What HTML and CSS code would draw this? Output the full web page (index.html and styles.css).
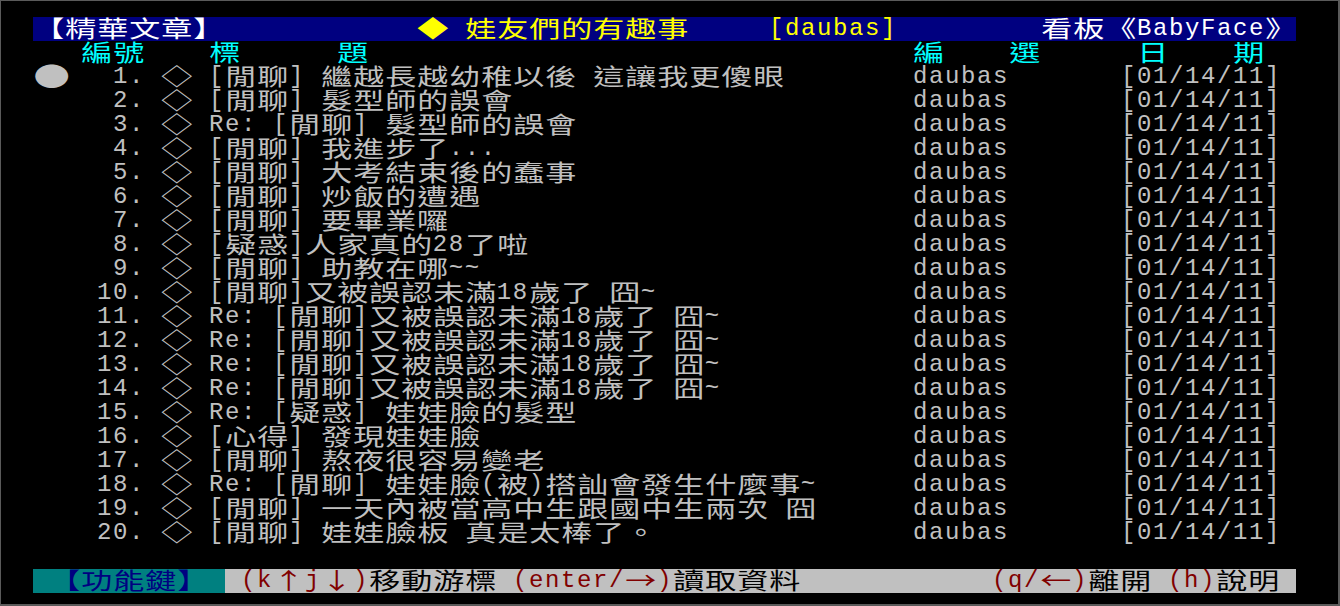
FILE: index.html
```html
<!DOCTYPE html>
<html lang="zh-Hant">
<head>
<meta charset="utf-8">
<title>精華文章 - BabyFace</title>
<link rel="stylesheet" href="styles.css">
</head>
<body>
<div class="term">
  <div class="hdr">
    <div><i>【</i><i>精</i><i>華</i><i>文</i><i>章</i><i>】</i></div>
    <div class="y"><i>◆</i> <i>娃</i><i>友</i><i>們</i><i>的</i><i>有</i><i>趣</i><i>事</i></div>
    <div class="y">[daubas]</div>
    <div><i>看</i><i>板</i><i>《</i>BabyFace<i>》</i></div>
  </div>
  <div class="cols">
    <div class="c2"><i>編</i><i>號</i></div>
    <div><i>標</i></div>
    <div><i>題</i></div>
    <div><i>編</i></div>
    <div><i>選</i></div>
    <div><i>日</i></div>
    <div><i>期</i></div>
  </div>
  <div class="list">
    <div class="it"><div class="cur"><i class="dot">●</i></div><div class="no">1.</div><div class="sy"><i>◇</i></div><div>[<i>閒</i><i>聊</i>] <i>繼</i><i>越</i><i>長</i><i>越</i><i>幼</i><i>稚</i><i>以</i><i>後</i> <i>這</i><i>讓</i><i>我</i><i>更</i><i>傻</i><i>眼</i></div><div>daubas</div><div>[01/14/11]</div></div>
    <div class="it"><div class="no">2.</div><div class="sy"><i>◇</i></div><div>[<i>閒</i><i>聊</i>] <i>髮</i><i>型</i><i>師</i><i>的</i><i>誤</i><i>會</i></div><div>daubas</div><div>[01/14/11]</div></div>
    <div class="it"><div class="no">3.</div><div class="sy"><i>◇</i></div><div>Re: [<i>閒</i><i>聊</i>] <i>髮</i><i>型</i><i>師</i><i>的</i><i>誤</i><i>會</i></div><div>daubas</div><div>[01/14/11]</div></div>
    <div class="it"><div class="no">4.</div><div class="sy"><i>◇</i></div><div>[<i>閒</i><i>聊</i>] <i>我</i><i>進</i><i>步</i><i>了</i>...</div><div>daubas</div><div>[01/14/11]</div></div>
    <div class="it"><div class="no">5.</div><div class="sy"><i>◇</i></div><div>[<i>閒</i><i>聊</i>] <i>大</i><i>考</i><i>結</i><i>束</i><i>後</i><i>的</i><i>蠢</i><i>事</i></div><div>daubas</div><div>[01/14/11]</div></div>
    <div class="it"><div class="no">6.</div><div class="sy"><i>◇</i></div><div>[<i>閒</i><i>聊</i>] <i>炒</i><i>飯</i><i>的</i><i>遭</i><i>遇</i></div><div>daubas</div><div>[01/14/11]</div></div>
    <div class="it"><div class="no">7.</div><div class="sy"><i>◇</i></div><div>[<i>閒</i><i>聊</i>] <i>要</i><i>畢</i><i>業</i><i>囉</i></div><div>daubas</div><div>[01/14/11]</div></div>
    <div class="it"><div class="no">8.</div><div class="sy"><i>◇</i></div><div>[<i>疑</i><i>惑</i>]<i>人</i><i>家</i><i>真</i><i>的</i>28<i>了</i><i>啦</i></div><div>daubas</div><div>[01/14/11]</div></div>
    <div class="it"><div class="no">9.</div><div class="sy"><i>◇</i></div><div>[<i>閒</i><i>聊</i>] <i>助</i><i>教</i><i>在</i><i>哪</i>~~</div><div>daubas</div><div>[01/14/11]</div></div>
    <div class="it"><div class="no">10.</div><div class="sy"><i>◇</i></div><div>[<i>閒</i><i>聊</i>]<i>又</i><i>被</i><i>誤</i><i>認</i><i>未</i><i>滿</i>18<i>歲</i><i>了</i> <i>囧</i>~</div><div>daubas</div><div>[01/14/11]</div></div>
    <div class="it"><div class="no">11.</div><div class="sy"><i>◇</i></div><div>Re: [<i>閒</i><i>聊</i>]<i>又</i><i>被</i><i>誤</i><i>認</i><i>未</i><i>滿</i>18<i>歲</i><i>了</i> <i>囧</i>~</div><div>daubas</div><div>[01/14/11]</div></div>
    <div class="it"><div class="no">12.</div><div class="sy"><i>◇</i></div><div>Re: [<i>閒</i><i>聊</i>]<i>又</i><i>被</i><i>誤</i><i>認</i><i>未</i><i>滿</i>18<i>歲</i><i>了</i> <i>囧</i>~</div><div>daubas</div><div>[01/14/11]</div></div>
    <div class="it"><div class="no">13.</div><div class="sy"><i>◇</i></div><div>Re: [<i>閒</i><i>聊</i>]<i>又</i><i>被</i><i>誤</i><i>認</i><i>未</i><i>滿</i>18<i>歲</i><i>了</i> <i>囧</i>~</div><div>daubas</div><div>[01/14/11]</div></div>
    <div class="it"><div class="no">14.</div><div class="sy"><i>◇</i></div><div>Re: [<i>閒</i><i>聊</i>]<i>又</i><i>被</i><i>誤</i><i>認</i><i>未</i><i>滿</i>18<i>歲</i><i>了</i> <i>囧</i>~</div><div>daubas</div><div>[01/14/11]</div></div>
    <div class="it"><div class="no">15.</div><div class="sy"><i>◇</i></div><div>Re: [<i>疑</i><i>惑</i>] <i>娃</i><i>娃</i><i>臉</i><i>的</i><i>髮</i><i>型</i></div><div>daubas</div><div>[01/14/11]</div></div>
    <div class="it"><div class="no">16.</div><div class="sy"><i>◇</i></div><div>[<i>心</i><i>得</i>] <i>發</i><i>現</i><i>娃</i><i>娃</i><i>臉</i></div><div>daubas</div><div>[01/14/11]</div></div>
    <div class="it"><div class="no">17.</div><div class="sy"><i>◇</i></div><div>[<i>閒</i><i>聊</i>] <i>熬</i><i>夜</i><i>很</i><i>容</i><i>易</i><i>變</i><i>老</i></div><div>daubas</div><div>[01/14/11]</div></div>
    <div class="it"><div class="no">18.</div><div class="sy"><i>◇</i></div><div>Re: [<i>閒</i><i>聊</i>] <i>娃</i><i>娃</i><i>臉</i>(<i>被</i>)<i>搭</i><i>訕</i><i>會</i><i>發</i><i>生</i><i>什</i><i>麼</i><i>事</i>~</div><div>daubas</div><div>[01/14/11]</div></div>
    <div class="it"><div class="no">19.</div><div class="sy"><i>◇</i></div><div>[<i>閒</i><i>聊</i>] <i>一</i><i>天</i><i>內</i><i>被</i><i>當</i><i>高</i><i>中</i><i>生</i><i>跟</i><i>國</i><i>中</i><i>生</i><i>兩</i><i>次</i> <i>囧</i></div><div>daubas</div><div>[01/14/11]</div></div>
    <div class="it"><div class="no">20.</div><div class="sy"><i>◇</i></div><div>[<i>閒</i><i>聊</i>] <i>娃</i><i>娃</i><i>臉</i><i>板</i> <i>真</i><i>是</i><i>太</i><i>棒</i><i>了</i><i>。</i></div><div>daubas</div><div>[01/14/11]</div></div>
  </div>
  <div class="ftr">
    <div class="fk"> <i>【</i><i>功</i><i>能</i><i>鍵</i><i>】</i> </div>
    <div class="fb">
      <span><span class="r">(k<i>↑</i>j<i>↓</i>)</span><i>移</i><i>動</i><i>游</i><i>標</i> <span class="r">(enter/<i>→</i>)</span><i>讀</i><i>取</i><i>資</i><i>料</i></span>
      <span><span class="r">(q/<i>←</i>)</span><i>離</i><i>開</i> <span class="r">(h)</span><i>說</i><i>明</i></span>
    </div>
  </div>
</div>
</body>
</html>
```
FILE: styles.css
```css
* {
  margin: 0;
  padding: 0;
  box-sizing: border-box;
}

html {
  background: #000;
}

body {
  width: 1340px;
  height: 606px;
  background: #000;
  border-style: solid;
  border-color: #5a5a5a;
  border-width: 1px 2px 2px 1px;
  overflow: hidden;
}

.term {
  display: flex;
  flex-direction: column;
  padding: 16px 0 0 32px;
  font-family: "Liberation Mono", monospace;
  font-size: 24px;
  line-height: 24px;
  letter-spacing: 1.6px;
  color: #c0c0c0;
}

.term div {
  white-space: pre;
  height: 24px;
}

.term .list {
  display: flex;
  flex-direction: column;
  height: auto;
}

.hdr {
  display: grid;
  grid-template-columns: 384px 352px 272px 1fr;
  width: 1263px;
  background: #000080;
  color: #fff;
}

.y {
  color: #ff0;
}

.cols {
  display: grid;
  grid-template-columns: 48px 128px 128px 576px 96px 128px 96px 1fr;
  color: #0ff;
}

.c2 {
  grid-column: 2;
}

.it {
  display: grid;
  grid-template-columns: 32px 80px 64px 704px 208px 160px;
}

.no {
  grid-column: 2;
  text-align: right;
}

.sy {
  padding-left: 16px;
}

.ftr {
  display: grid;
  grid-template-columns: 192px 1fr;
  width: 1263px;
  margin-top: 24px;
}

.fk {
  background: #008080;
  color: #000080;
}

.fb {
  display: flex;
  justify-content: space-between;
  padding: 0 16px;
  background: #c0c0c0;
  color: #000;
}

.r {
  color: #800000;
}

/* one full-width terminal cell (32px), glyph stretched horizontally */
i {
  display: inline-block;
  vertical-align: top;
  width: 23.7px;
  margin: 0 4.15px;
  height: 24px;
  text-align: center;
  letter-spacing: 0;
  font-style: normal;
  font-family: "Noto Sans CJK TC", "Noto Sans CJK JP", sans-serif;
  font-size: 23px;
  line-height: 20px;
  transform: scaleX(1.35);
}

i.dot {
  width: 22.8px;
  margin: 0 4.6px;
  font-size: 26px;
  transform: scaleX(1.4);
}
```
